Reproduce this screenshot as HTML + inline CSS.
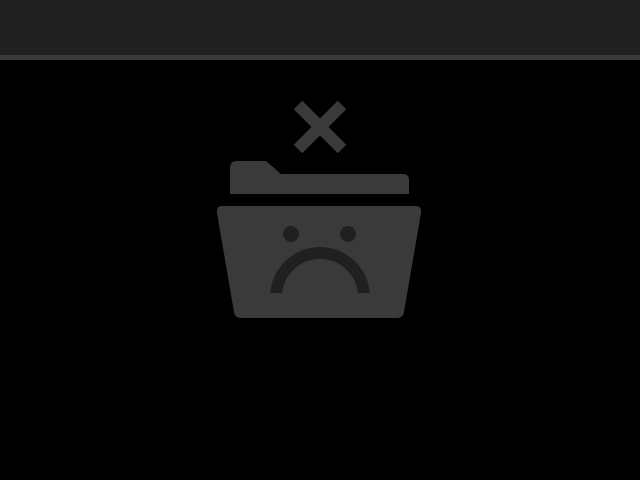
<!DOCTYPE html>
<html><head><style>
html,body{margin:0;padding:0;background:#000;width:640px;height:480px;overflow:hidden}
.hdr{position:absolute;left:0;top:0;width:640px;height:55px;background:#212121}
.ln{position:absolute;left:0;top:55px;width:640px;height:5px;background:#3b3b3b}
svg{position:absolute;left:0;top:0}
</style></head><body>
<div class="hdr"></div><div class="ln"></div>
<svg width="640" height="480" viewBox="0 0 640 480">
<defs><clipPath id="c"><rect x="0" y="0" width="640" height="293"/></clipPath></defs>
<g stroke="#3a3a3a" stroke-width="12"><line x1="298" y1="105" x2="342" y2="149"/><line x1="342" y1="105" x2="298" y2="149"/></g>
<path d="M230 168 Q230 161 237 161 L266 161 L281 174 L403 174 Q409 174 409 180 L409 194 L230 194 Z" fill="#3a3a3a"/>
<path d="M222 206 L416 206 Q422 206 421 213 L404 312 Q403 318 397 318 L241 318 Q235 318 234 312 L217 213 Q216 206 222 206 Z" fill="#3a3a3a"/>
<circle cx="291" cy="234" r="8" fill="#202020"/>
<circle cx="348" cy="234" r="8" fill="#202020"/>
<circle cx="320" cy="297" r="44" fill="none" stroke="#202020" stroke-width="12" clip-path="url(#c)"/>
</svg>
</body></html>
